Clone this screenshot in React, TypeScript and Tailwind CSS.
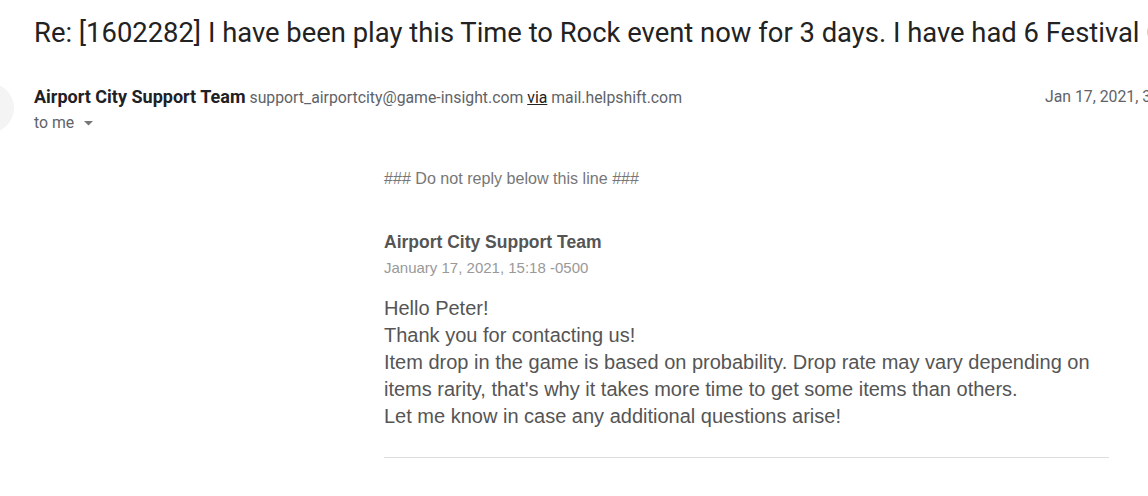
function Caret() {
  return (
    <svg width="9" height="5" viewBox="0 0 9 5" className="ml-[10px] mt-[1px]">
      <path d="M0 0 L9 0 L4.5 4.5 Z" fill="#777" />
    </svg>
  );
}

export default function App() {
  const roboto = { fontFamily: "Roboto, 'Liberation Sans', sans-serif" };
  const arial = { fontFamily: "'Liberation Sans', Arial, sans-serif" };
  return (
    <div className="w-[1148px] h-[496px] overflow-hidden bg-white" style={roboto}>
      <h2 className="pl-[34px] pt-[15px] text-[27.4px] leading-[36px] text-[#222] whitespace-nowrap font-normal">
        Re: [1602282] I have been play this Time to Rock event now for 3 days. I have had 6 Festival Cakes drop
      </h2>

      <div className="flex items-start mt-[34px]">
        <div className="w-[50px] h-[50px] rounded-full bg-[#f4f4f4] ml-[-36px] mt-[-2px] shrink-0" />
        <div className="ml-[20px] w-[1011px] shrink-0">
          <div className="flex items-baseline whitespace-nowrap leading-[24px]">
            <span className="text-[18px] font-bold text-[#202124]">Airport City Support Team</span>
            <span className="ml-[4px] text-[15.8px] text-[#5f6368]">
              support_airportcity@game-insight.com <span className="underline text-[#222]">via</span> mail.helpshift.com
            </span>
          </div>
          <div className="flex items-center mt-[3px] text-[15.8px] leading-[20px] text-[#5f6368]">
            <span>to me</span>
            <Caret />
          </div>
        </div>
        <div className="text-[15.8px] leading-[24px] text-[#5f6368] whitespace-nowrap">Jan 17, 2021, 3:18 PM</div>
      </div>

      <div className="ml-[384px] w-[725px] mt-[35px]" style={arial}>
        <p className="text-[16.1px] leading-[20px] text-[#777]">### Do not reply below this line ###</p>
        <p className="mt-[43px] text-[17.5px] leading-[22px] font-bold text-[#555]">Airport City Support Team</p>
        <p className="mt-[5px] text-[15px] leading-[20px] text-[#999]">January 17, 2021, 15:18 -0500</p>
        <div className="mt-[17px] text-[20px] leading-[27px] text-[#555]">
          <p>Hello Peter!</p>
          <p>Thank you for contacting us!</p>
          <p>Item drop in the game is based on probability. Drop rate may vary depending on</p>
          <p>items rarity, that's why it takes more time to get some items than others.</p>
          <p>Let me know in case any additional questions arise!</p>
        </div>
        <div className="mt-[27px] h-px bg-[#ddd]" />
      </div>
    </div>
  );
}
